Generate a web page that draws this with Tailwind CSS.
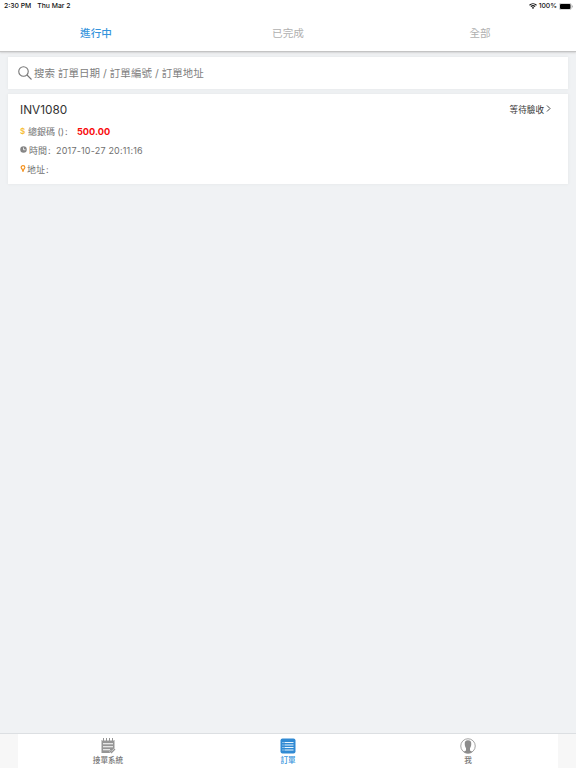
<!DOCTYPE html>
<html lang="zh-Hant">

<head>
    <meta charset="UTF-8">
    <meta name="viewport" content="width=device-width, initial-scale=1.0">
    <title>訂單</title>
    <script src="https://cdn.jsdelivr.net/npm/@tailwindcss/browser@4"></script>
</head>

<body class="font-[Inter,'Noto_Sans_CJK_TC',sans-serif]">
    <div class="h-screen flex flex-col bg-[#f0f2f4] overflow-hidden">

        <header class="h-[51px] shrink-0 bg-white shadow-[0_1px_1px_#c4c4c4,0_2px_2px_#d8d8da]">
            <!-- status bar -->
            <div class="h-3 flex items-center justify-between pl-[4px] pr-[3px] text-[6.8px] leading-3 font-medium text-[#111]">
                <div class="flex gap-[6px]">
                    <span>2:30 PM</span>
                    <span>Thu Mar 2</span>
                </div>
                <div class="flex items-center gap-[2px]">
                    <svg viewBox="0 0 16 12" fill="none" stroke="#111" stroke-width="2.2" class="w-2 h-[6px]">
                        <path d="M1 4.5C5 .6 11 .6 15 4.5M3.8 7.3c2.4-2.2 6-2.2 8.4 0" />
                        <path d="M8 12L5.6 9.6c1.4-1.2 3.4-1.2 4.8 0z" fill="#111" stroke="none" />
                    </svg>
                    <span>100%</span>
                    <svg viewBox="0 0 28 14" class="w-[14px] h-[7px]">
                        <rect x=".5" y=".5" width="24" height="13" rx="3.5" fill="#fff" stroke="#999" />
                        <rect x="2" y="2" width="21" height="10" rx="2" fill="#000" />
                        <path d="M26 4.5c2 .8 2 4.2 0 5z" fill="#999" />
                    </svg>
                </div>
            </div>
            <!-- tabs -->
            <nav class="grid grid-cols-3 text-center text-[10.6px] leading-[44px] h-[39px] text-[#b0b0b0]">
                <a class="text-[#3594dc] font-medium">進行中</a>
                <a>已完成</a>
                <a>全部</a>
            </nav>
        </header>

        <main class="flex-1 px-2 pt-[6px]">
            <div class="h-8 flex items-center bg-white pl-[10px] text-[10.5px] text-[#808080] shadow-[0_0_3px_#e2e4e6]">
                <svg viewBox="0 0 28 28" fill="none" stroke="#777" stroke-width="2.2" class="w-[14px] h-[14px] mr-[2px]">
                    <circle cx="11" cy="11" r="9.5" />
                    <path d="M18 18l9 9" />
                </svg>
                <span class="pt-px tracking-[0.02px]">搜索 訂單日期 / 訂單編號 / 訂單地址</span>
            </div>

            <div class="h-[90px] mt-[5px] bg-white pl-3 pr-[17px] pt-[7px] text-[9px] text-[#707070] shadow-[0_0_3px_#e2e4e6]">
                <div class="flex items-center justify-between h-[18px]">
                    <h1 class="pt-px text-[11.8px] text-[#333]">INV1080</h1>
                    <div class="flex items-center text-[8.6px] text-[#333]">
                        <span>等待驗收</span>
                        <svg viewBox="0 0 10 14" fill="none" stroke="#444" stroke-width="2" class="w-[5px] h-[7px] ml-[2px] mb-[3px]">
                            <path d="M2 1l6 6-6 6" />
                        </svg>
                    </div>
                </div>
                <div class="flex items-center h-[19px] mt-[3px]">
                    <span class="w-[6px] mb-px text-[8px] font-semibold text-[#f7bd35] leading-none">$</span>
                    <span class="w-[49px] ml-[2px]">總銀碼 ()<span class="ml-px">:</span></span>
                    <b class="pt-px text-[9.2px] text-[#f80d0d]">500.00</b>
                </div>
                <div class="flex items-center h-[19px]">
                    <svg viewBox="0 0 14 14" class="w-[7px] h-[7px] mr-[2px] mb-[2px]">
                        <circle cx="7" cy="7" r="6.5" fill="#858585" />
                        <path d="M7 3v4.5h4" fill="none" stroke="#fff" stroke-width="1.6" />
                    </svg>
                    <span class="w-[27px]">時間<span class="ml-px">:</span></span>
                    <span class="tracking-[0.19px]">2017-10-27 20:11:16</span>
                </div>
                <div class="flex items-center h-[19px]">
                    <svg viewBox="0 0 12 14" class="w-[6px] h-[7px] mr-px mb-[3px]">
                        <circle cx="6" cy="5" r="3.7" fill="#fff" stroke="#f5921e" stroke-width="2.4" />
                        <path d="M3.500 9h5L6.800 14H5.200z" fill="#f5921e" />
                    </svg>
                    <span>地址<span class="ml-px">:</span></span>
                </div>
            </div>
        </main>

        <footer class="h-[35px] shrink-0 bg-[#f7f7f7] border-t border-[#dcdfe2] px-[18px]">
            <nav class="h-full grid grid-cols-3 bg-white text-[7.6px] leading-[10px] font-medium text-[#777]">
                <a class="flex flex-col items-center pt-1">
                    <svg viewBox="0 0 32 32" class="w-4 h-4 mb-[2px]">
                        <path d="M3 4h26v19l-6 7H3z" fill="#959595" />
                        <path d="M7 0v6M13 0v6M19 0v6M25 0v6" stroke="#fff" stroke-width="4" />
                        <path d="M7 0v6M13 0v6M19 0v6M25 0v6" stroke="#959595" stroke-width="2" />
                        <path d="M6 11.500h20M6 17.500h20M6 23.500h14" stroke="#fff" stroke-width="2" />
                        <path d="M20 26l3 3 7-7" fill="none" stroke="#fff" stroke-width="4" />
                        <path d="M20 26l3 3 7-7" fill="none" stroke="#959595" stroke-width="2.600" />
                    </svg>
                    <span>接單系統</span>
                </a>
                <a class="flex flex-col items-center pt-1 text-[#3594dc]">
                    <svg viewBox="0 0 32 32" class="w-4 h-4 mb-[2px]">
                        <rect x="1" y="1" width="30" height="30" rx="4" fill="#318ad3" />
                        <path d="M9 9h18M9 14h18M9 19h18M9 24h18" stroke="#e8f4fd" stroke-width="2" />
                        <path d="M5 9h2M5 14h2M5 19h2M5 24h2" stroke="#e8f4fd" stroke-width="2" />
                    </svg>
                    <span>訂單</span>
                </a>
                <a class="flex flex-col items-center pt-1">
                    <svg viewBox="0 0 32 32" class="w-4 h-4 mb-[2px]">
                        <circle cx="16" cy="16" r="14.500" fill="#fff" stroke="#999" stroke-width="1.800" />
                        <path d="M16 4.500c-5 0-7 3-6.500 8 .2 4 1.300 6 2.500 7.500v4c0 2-3 2.500-5 3.500 5 4 13 4 18 0-2-1-5-1.500-5-3.500v-4c1.200-1.500 2.300-3.500 2.500-7.500.5-5-1.500-8-6.500-8z" fill="#8c8c8c" />
                    </svg>
                    <span>我</span>
                </a>
            </nav>
        </footer>
    </div>
</body>

</html>
